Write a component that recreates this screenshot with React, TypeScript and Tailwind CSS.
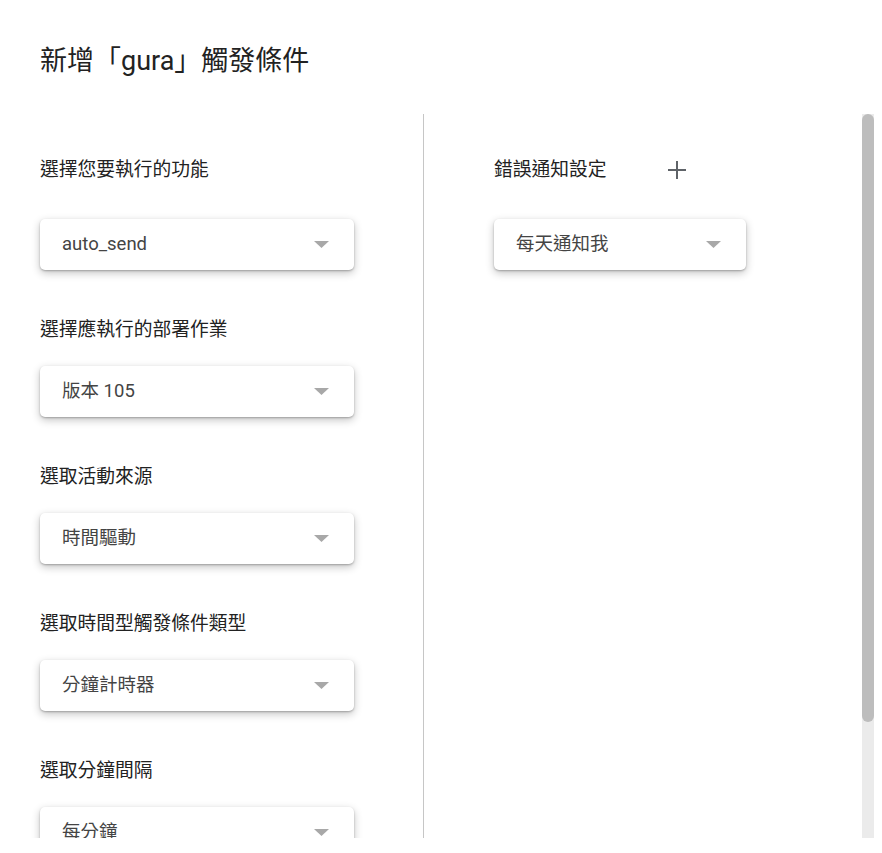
import React from "react";

const font = { fontFamily: 'Roboto, "Noto Sans CJK TC", sans-serif' };

const Caret = () => (
  <svg width="15" height="7" viewBox="0 0 15 7" className="shrink-0">
    <path d="M0 0 L15 0 L7.5 7 Z" fill="#a8a8a8" />
  </svg>
);

const Select = ({ value, width }: { value: string; width: string }) => (
  <div
    className={`${width} h-[51px] flex items-center justify-between pl-[22px] pr-[25px] bg-white rounded-[5px] shadow-[0_1px_2px_rgba(0,0,0,0.25),0_3px_8px_rgba(0,0,0,0.24)]`}
  >
    <span className="text-[18.5px] text-[#444] leading-none">{value}</span>
    <Caret />
  </div>
);

const Field = ({ label, value }: { label: string; value: string }) => (
  <div className="mt-[48px]">
    <div className="text-[18.75px] leading-[24px] text-[#222]">{label}</div>
    <div className="mt-[24px]">
      <Select value={value} width="w-[314px]" />
    </div>
  </div>
);

export default function App() {
  return (
    <div className="w-[882px] h-[853px] bg-white flex flex-col overflow-hidden" style={font}>
      {/* heading */}
      <div className="h-[114px] shrink-0 pl-[40px] pt-[45px]">
        <h2 className="text-[27px] leading-[32px] text-[#222] font-normal">新增「gura」觸發條件</h2>
      </div>

      {/* body */}
      <div className="h-[724px] shrink-0 flex pr-[8px]">
        <div className="flex-1 flex overflow-hidden pl-[40px]">
          {/* left column */}
          <div className="w-[384px] shrink-0 border-r border-[#c6c6c6]">
            <div className="h-[48px] mt-[32px] flex items-center text-[18.75px] text-[#222]">選擇您要執行的功能</div>
            <div className="mt-[25px]">
              <Select value="auto_send" width="w-[314px]" />
            </div>
            <Field label="選擇應執行的部署作業" value="版本 105" />
            <Field label="選取活動來源" value="時間驅動" />
            <Field label="選取時間型觸發條件類型" value="分鐘計時器" />
            <Field label="選取分鐘間隔" value="每分鐘" />
          </div>

          {/* right column */}
          <div className="pl-[70px]">
            <div className="h-[48px] mt-[32px] flex items-center">
              <span className="text-[18.75px] text-[#222]">錯誤通知設定</span>
              <button className="ml-[46px] w-[48px] h-[48px] flex items-center justify-center">
                <svg width="20" height="20" viewBox="0 0 20 20">
                  <path d="M10 1 V19 M1 10 H19" stroke="#5f6368" strokeWidth="2" />
                </svg>
              </button>
            </div>
            <div className="mt-[25px]">
              <Select value="每天通知我" width="w-[252px]" />
            </div>
          </div>
        </div>

        {/* scrollbar */}
        <div className="w-[12px] shrink-0 bg-[#ebebeb] flex flex-col">
          <div className="h-[608px] bg-[#bdbdbd] rounded-full" />
        </div>
      </div>
    </div>
  );
}
